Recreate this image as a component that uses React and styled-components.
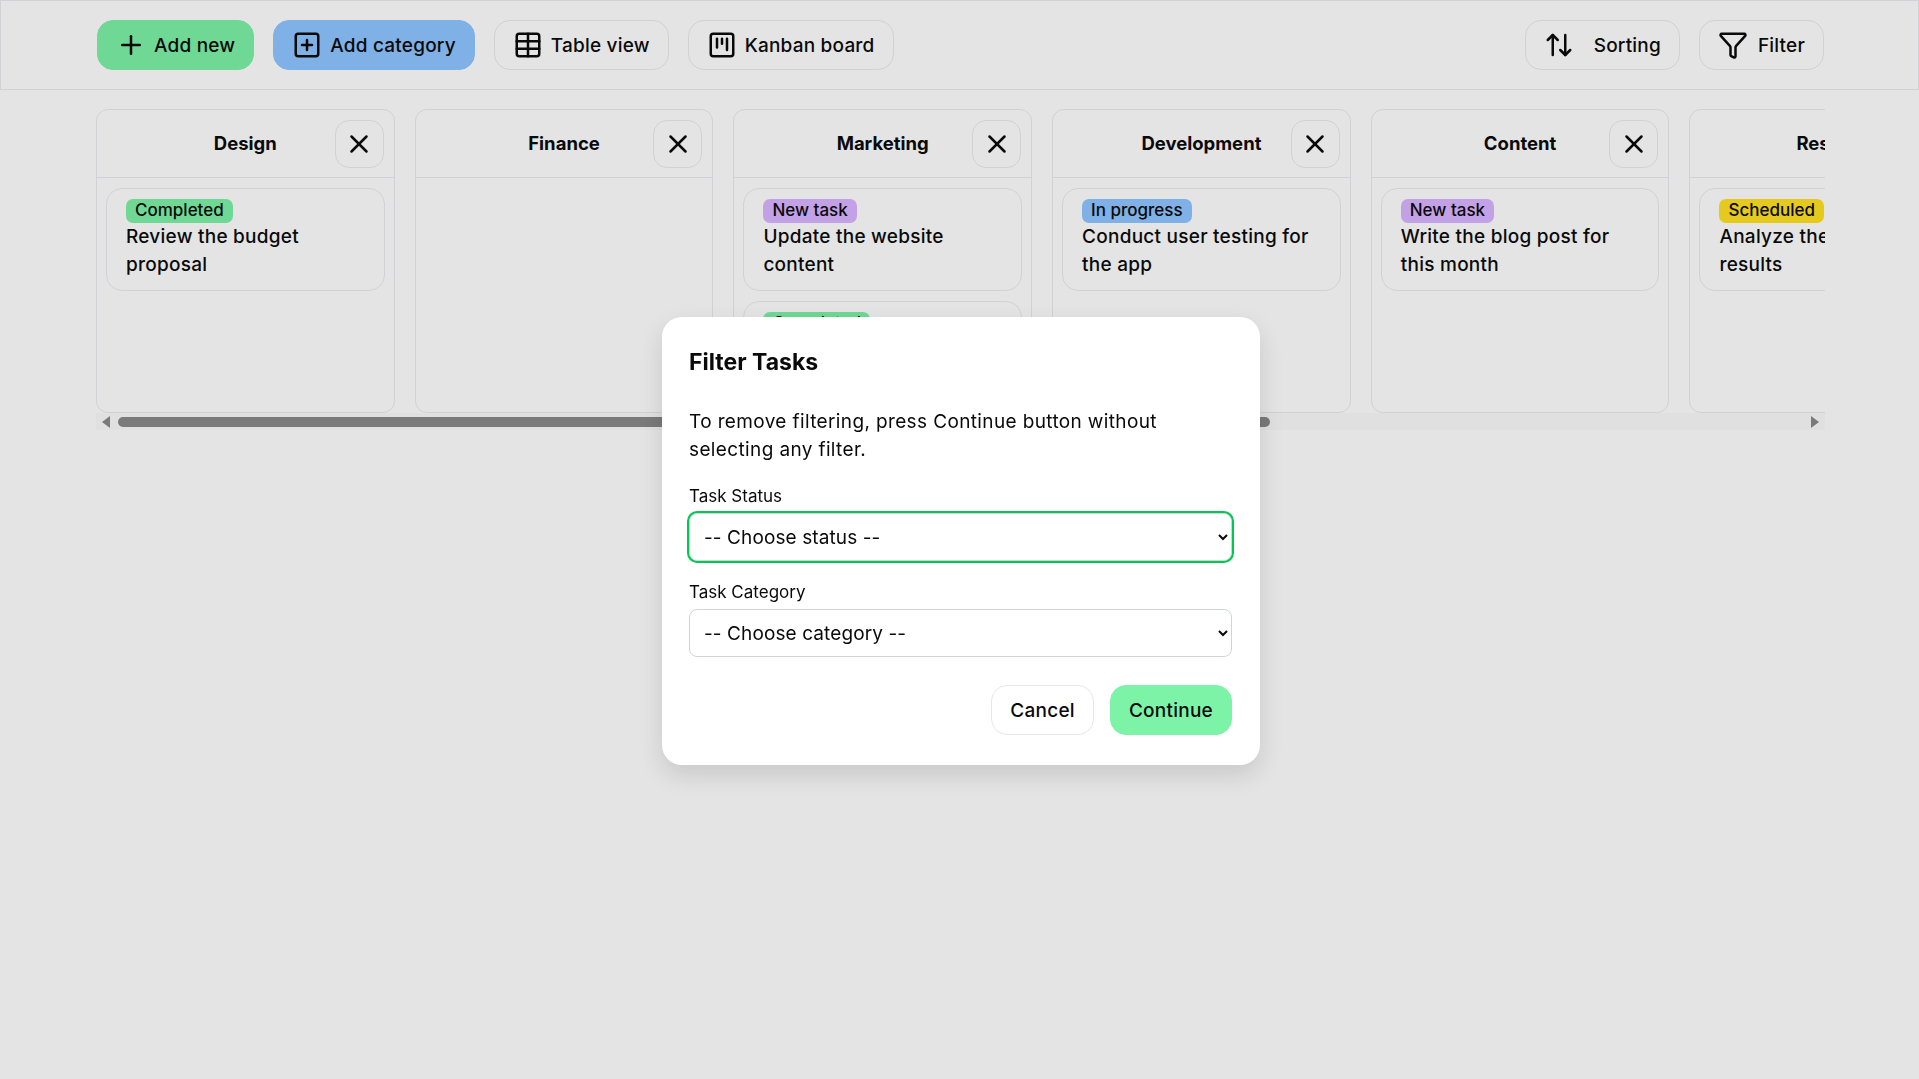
import React from "react";
import styled, { createGlobalStyle } from "styled-components";
import { Plus, SquarePlus, Table, SquareKanban, ArrowUpDown, Funnel, X } from "lucide-react";

const GlobalStyle = createGlobalStyle`
  * {
    box-sizing: border-box;
  }
  html, body {
    margin: 0;
    height: 100%;
    background: #e4e4e4;
  }
  body {
    font-family: "Inter", "Liberation Sans", sans-serif;
    color: #0a0a0a;
  }
`;

const Page = styled.div`
  min-height: 1079px;
  background: #e4e4e4;
`;

const Toolbar = styled.header`
  height: 90px;
  padding: 19px 94px 0 96px;
  display: flex;
  justify-content: space-between;
  border: 1px solid #d1d1d6;
`;

const ButtonGroup = styled.div`
  display: flex;
  gap: 19px;
`;

const ToolButton = styled.button`
  height: 50px;
  padding: 0 18px;
  display: flex;
  align-items: center;
  gap: ${(p) => p.$gap || 8}px;
  font: 500 19px "Inter", sans-serif;
  letter-spacing: 0.2px;
  color: #0a0a0a;
  background: ${(p) => p.$bg || "transparent"};
  border: 1px solid ${(p) => p.$bg || "#d1d1d6"};
  border-radius: 16px;
`;

const Board = styled.section`
  margin: 19px 94px 0 96px;
`;

const Columns = styled.div`
  display: flex;
  gap: 20px;
  overflow: hidden;
`;

const Column = styled.div`
  flex: 0 0 298.7px;
  height: 304px;
  border: 1px solid #d1d1d6;
  border-radius: 12px;
  overflow: hidden;
`;

const ColumnHead = styled.div`
  height: 68px;
  padding: 10px 10px 0;
  display: grid;
  grid-template-columns: 49px 1fr 49px;
  align-items: start;
  border-bottom: 1px solid #d1d1d6;
`;

const ColumnTitle = styled.h3`
  grid-column: 2;
  margin: 0;
  line-height: 47px;
  text-align: center;
  white-space: nowrap;
  font-size: 18.5px;
  font-weight: 700;
`;

const CloseButton = styled.button`
  grid-column: 3;
  width: 49px;
  height: 48px;
  padding: 0;
  display: flex;
  align-items: center;
  justify-content: center;
  color: #0a0a0a;
  background: transparent;
  border: 1px solid #d1d1d6;
  border-radius: 14px;
`;

const ColumnBody = styled.div`
  padding: 10px 9px;
  display: flex;
  flex-direction: column;
  gap: 10px;
`;

const Card = styled.div`
  height: 103px;
  padding: 10px 19px;
  border: 1px solid #d1d1d6;
  border-radius: 16px;
`;

const Badge = styled.span`
  display: block;
  width: fit-content;
  height: 24px;
  padding: 0 9px;
  line-height: 23px;
  font-size: 17px;
  font-weight: 500;
  white-space: nowrap;
  background: ${(p) => p.$bg};
  border-radius: 7px;
`;

const CardText = styled.p`
  margin: 0;
  font-size: 19px;
  line-height: 28px;
  letter-spacing: 0.25px;
  font-weight: 500;
`;

const Scrollbar = styled.div`
  height: 17px;
  padding: 0 6px;
  display: flex;
  align-items: center;
  justify-content: space-between;
  background: #e0e0e0;
`;

const ScrollArrow = styled.span`
  width: 0;
  height: 0;
  border-top: 6px solid transparent;
  border-bottom: 6px solid transparent;
  ${(p) => (p.$right ? "border-left: 8px solid #7a7a7a;" : "border-right: 8px solid #7a7a7a;")}
`;

const ScrollThumb = styled.div`
  flex: 0 0 1152px;
  height: 10px;
  margin: 0 auto 0 8px;
  background: #7a7a7a;
  border-radius: 5px;
`;

const Overlay = styled.div`
  position: fixed;
  inset: 0;
  display: flex;
  align-items: center;
  justify-content: center;
  padding: 3px 0 0 3px;
`;

const Modal = styled.form`
  width: 598px;
  height: 448px;
  padding: 29px 28px 28px 27px;
  background: #fff;
  border-radius: 20px;
  box-shadow: 0 10px 25px rgba(0, 0, 0, 0.12);
`;

const ModalTitle = styled.h2`
  margin: 0 0 30px;
  font-size: 23px;
  line-height: 32px;
  font-weight: 700;
`;

const ModalText = styled.p`
  margin: 0 0 20px;
  font-size: 19px;
  line-height: 28px;
  letter-spacing: 0.37px;
  font-weight: 400;
`;

const Field = styled.label`
  display: block;
  margin-bottom: 19px;
  font-size: 17px;
  line-height: 24px;
`;

const Select = styled.select`
  display: block;
  width: 100%;
  height: 48px;
  margin-top: 5px;
  padding: 0 10px;
  font: 400 19px "Inter", sans-serif;
  letter-spacing: 0.1px;
  color: #0a0a0a;
  background: #fff;
  border: 1px solid #d1d5db;
  border-radius: 8px;
  outline: none;
  box-shadow: ${(p) => (p.$focused ? "0 0 0 2px #00c853" : "none")};
`;

const ModalActions = styled.div`
  margin-top: 28px;
  display: flex;
  justify-content: flex-end;
  gap: 16px;
`;

const ModalButton = styled.button`
  height: 50px;
  padding: 0 18px;
  font: 500 19px "Inter", sans-serif;
  letter-spacing: 0.25px;
  color: #0a0a0a;
  background: ${(p) => (p.$primary ? "#7df3a8" : "#fff")};
  border: 1px solid ${(p) => (p.$primary ? "#7df3a8" : "#e5e7eb")};
  border-radius: 16px;
`;

const GREEN = "#6fd894";
const BLUE = "#7fb0e6";
const PURPLE = "#c3a1e6";
const YELLOW = "#e5c91c";

const columns = [
  { title: "Design", cards: [{ status: "Completed", color: GREEN, text: "Review the budget proposal" }] },
  { title: "Finance", cards: [] },
  {
    title: "Marketing",
    cards: [
      { status: "New task", color: PURPLE, text: "Update the website content" },
      { status: "Completed", color: GREEN, text: "Prepare the campaign brief" },
    ],
  },
  { title: "Development", cards: [{ status: "In progress", color: BLUE, text: "Conduct user testing for the app" }] },
  { title: "Content", cards: [{ status: "New task", color: PURPLE, text: "Write the blog post for this month" }] },
  { title: "Research", cards: [{ status: "Scheduled", color: YELLOW, text: "Analyze the survey results" }] },
];

export default function App() {
  return (
    <Page>
      <GlobalStyle />
      <Toolbar>
        <ButtonGroup>
          <ToolButton $bg={GREEN}>
            <Plus size={30} />
            Add new
          </ToolButton>
          <ToolButton $bg={BLUE}>
            <SquarePlus size={30} />
            Add category
          </ToolButton>
          <ToolButton>
            <Table size={30} />
            Table view
          </ToolButton>
          <ToolButton>
            <SquareKanban size={30} />
            Kanban board
          </ToolButton>
        </ButtonGroup>
        <ButtonGroup>
          <ToolButton $gap={20}>
            <ArrowUpDown size={30} />
            Sorting
          </ToolButton>
          <ToolButton $gap={10}>
            <Funnel size={30} />
            Filter
          </ToolButton>
        </ButtonGroup>
      </Toolbar>

      <Board>
        <Columns>
          {columns.map((col) => (
            <Column key={col.title}>
              <ColumnHead>
                <ColumnTitle>{col.title}</ColumnTitle>
                <CloseButton>
                  <X size={30} />
                </CloseButton>
              </ColumnHead>
              <ColumnBody>
                {col.cards.map((card) => (
                  <Card key={card.text}>
                    <Badge $bg={card.color}>{card.status}</Badge>
                    <CardText>{card.text}</CardText>
                  </Card>
                ))}
              </ColumnBody>
            </Column>
          ))}
        </Columns>
        <Scrollbar>
          <ScrollArrow />
          <ScrollThumb />
          <ScrollArrow $right />
        </Scrollbar>
      </Board>

      <Overlay>
        <Modal>
          <ModalTitle>Filter Tasks</ModalTitle>
          <ModalText>To remove filtering, press Continue button without selecting any filter.</ModalText>
          <Field>
            Task Status
            <Select $focused>
              <option>-- Choose status --</option>
            </Select>
          </Field>
          <Field>
            Task Category
            <Select>
              <option>-- Choose category --</option>
            </Select>
          </Field>
          <ModalActions>
            <ModalButton type="button">Cancel</ModalButton>
            <ModalButton type="button" $primary>
              Continue
            </ModalButton>
          </ModalActions>
        </Modal>
      </Overlay>
    </Page>
  );
}
